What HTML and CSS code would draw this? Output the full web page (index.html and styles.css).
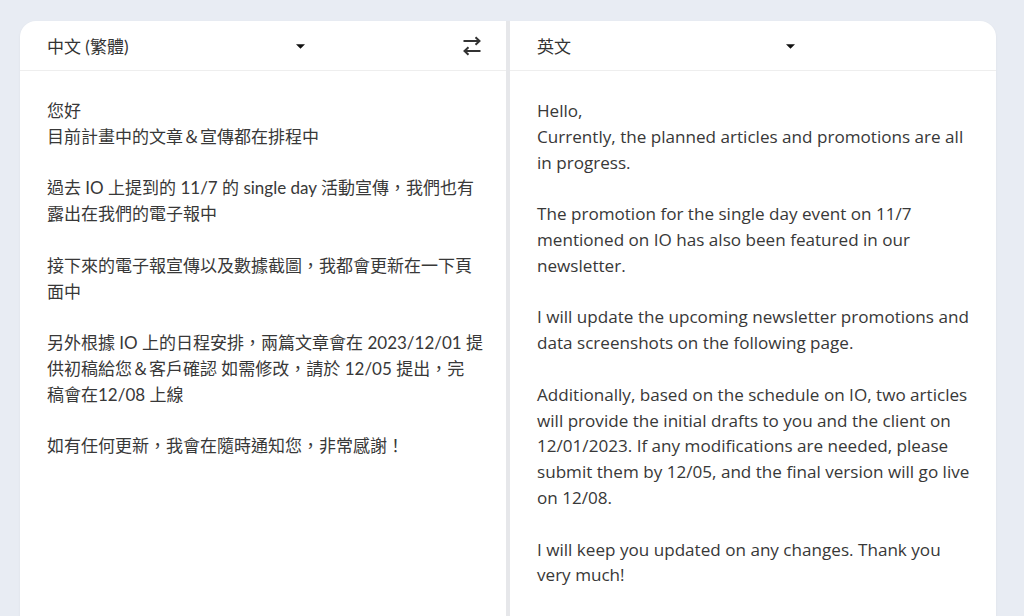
FILE: index.html
```html
<!DOCTYPE html>
<html lang="zh-Hant">
<head>
<meta charset="utf-8">
<link rel="stylesheet" href="styles.css">
</head>
<body>
<div class="card">
  <section class="panel">
    <header class="bar">
      <span class="lang">中文 (繁體)</span>
      <svg class="caret" viewBox="0 0 10 5" width="9" height="5"><path d="M0 0h10L5 5z"/></svg>
      <span class="spacer"></span>
      <svg class="swap" viewBox="0 0 20 20" width="20" height="20"><path d="M1.5 5H17.5M13.5 1.2L17.5 5L13.5 8.8M18.5 15H2.5M6.5 11.2L2.5 15L6.5 18.8"/></svg>
    </header>
    <div class="text zh">
      <p>您好<br>目前計畫中的文章＆宣傳都在排程中</p>
      <p>過去 IO 上提到的 11/7 的 single day 活動宣傳，我們也有<br>露出在我們的電子報中</p>
      <p>接下來的電子報宣傳以及數據截圖，我都會更新在一下頁<br>面中</p>
      <p>另外根據 IO 上的日程安排，兩篇文章會在 2023/12/01 提<br>供初稿給您＆客戶確認 如需修改，請於 12/05 提出，完<br>稿會在12/08 上線</p>
      <p>如有任何更新，我會在隨時通知您，非常感謝！</p>
    </div>
  </section>
  <div class="divider"></div>
  <section class="panel">
    <header class="bar">
      <span class="lang">英文</span>
      <svg class="caret" viewBox="0 0 10 5" width="9" height="5"><path d="M0 0h10L5 5z"/></svg>
      <span class="spacer"></span>
    </header>
    <div class="text en">
      <p>Hello,<br>Currently, the planned articles and promotions are all<br>in progress.</p>
      <p>The promotion for the single day event on 11/7<br>mentioned on IO has also been featured in our<br>newsletter.</p>
      <p>I will update the upcoming newsletter promotions and<br>data screenshots on the following page.</p>
      <p>Additionally, based on the schedule on IO, two articles<br>will provide the initial drafts to you and the client on<br>12/01/2023. If any modifications are needed, please<br>submit them by 12/05, and the final version will go live<br>on 12/08.</p>
      <p>I will keep you updated on any changes. Thank you<br>very much!</p>
    </div>
  </section>
</div>
</body>
</html>
```
FILE: styles.css
```css
html, body {
  margin: 0;
  height: 100%;
  overflow: hidden;
}
body {
  background: #e8ecf3;
  font-family: Lato, "Noto Sans CJK TC", sans-serif;
  color: #333;
  padding: 21px 28px 0 20px;
  box-sizing: border-box;
}
.card {
  display: flex;
  background: #fff;
  border-radius: 16px 16px 0 0;
  height: 595px;
  box-shadow: 0 1px 3px rgba(0,0,0,0.05);
  overflow: hidden;
}
.panel {
  flex: 1 1 0;
  min-width: 0;
  display: flex;
  flex-direction: column;
}
.divider {
  width: 4px;
  background: #e6e7ea;
}
.bar {
  height: 49px;
  border-bottom: 1px solid #eeeeee;
  display: flex;
  align-items: center;
  padding: 0 24px 0 27px;
  font-size: 17px;
}
.lang {
  width: 249px;
  color: #333;
}
.caret {
  fill: #111;
  margin-top: 1px;
}
.spacer { flex: 1; }
.swap {
  fill: none;
  stroke: #333;
  stroke-width: 2;
  margin-top: 1px;
}
.text {
  padding: 27px 27px 0;
  line-height: 25.8px;
  color: #383838;
  white-space: nowrap;
}
.text p { margin: 0 0 25.8px; }
.zh { font-family: Lato, "Noto Sans CJK TC", sans-serif; font-size: 17px; }
.en { font-family: "Open Sans", "Noto Sans CJK TC", sans-serif; font-size: 17.1px; }
```
